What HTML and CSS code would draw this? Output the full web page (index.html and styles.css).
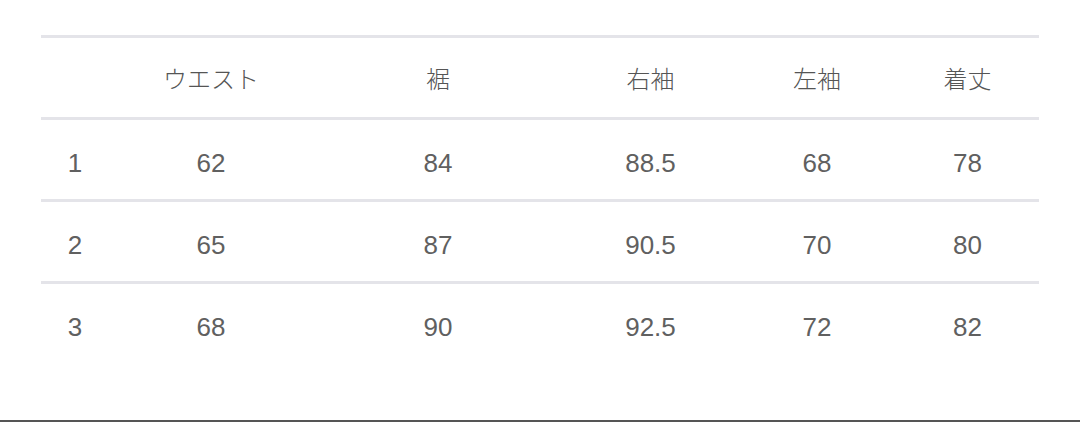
FILE: index.html
```html
<!DOCTYPE html>
<html lang="ja">
<head>
<meta charset="utf-8">
<link rel="stylesheet" href="styles.css">
</head>
<body>
<div class="page">
  <div class="table">
    <div class="row head">
      <div class="cell"></div>
      <div class="cell">ウエスト</div>
      <div class="cell">裾</div>
      <div class="cell">右袖</div>
      <div class="cell">左袖</div>
      <div class="cell">着丈</div>
    </div>
    <div class="row">
      <div class="cell">1</div>
      <div class="cell">62</div>
      <div class="cell">84</div>
      <div class="cell">88.5</div>
      <div class="cell">68</div>
      <div class="cell">78</div>
    </div>
    <div class="row">
      <div class="cell">2</div>
      <div class="cell">65</div>
      <div class="cell">87</div>
      <div class="cell">90.5</div>
      <div class="cell">70</div>
      <div class="cell">80</div>
    </div>
    <div class="row last">
      <div class="cell">3</div>
      <div class="cell">68</div>
      <div class="cell">90</div>
      <div class="cell">92.5</div>
      <div class="cell">72</div>
      <div class="cell">82</div>
    </div>
  </div>
</div>
<div class="bottom-bar"></div>
</body>
</html>
```

FILE: styles.css
```css
html, body {
  margin: 0;
  padding: 0;
  background: #ffffff;
}
body {
  width: 1080px;
  height: 422px;
  display: flex;
  flex-direction: column;
  overflow: hidden;
  font-family: "Liberation Sans", "Noto Sans CJK JP", sans-serif;
  color: #606060;
}
.page {
  flex: 1;
  padding: 35px 41px 0 41px;
}
.table {
  border-top: 3px solid #e4e4e9;
}
.row {
  display: grid;
  grid-template-columns: 68px 204px 250px 175px 158px 143px;
  height: 79px;
  border-bottom: 3px solid #e4e4e9;
}
.row.last {
  border-bottom: none;
}
.cell {
  display: flex;
  align-items: center;
  justify-content: center;
  font-size: 26px;
  line-height: 1;
  padding-top: 6px;
}
.head .cell {
  font-family: "Noto Sans CJK JP", sans-serif;
  font-size: 24px;
  color: #555555;
  font-weight: 300;
  padding-top: 0;
}
.bottom-bar {
  height: 2px;
  background: #555555;
}
```
